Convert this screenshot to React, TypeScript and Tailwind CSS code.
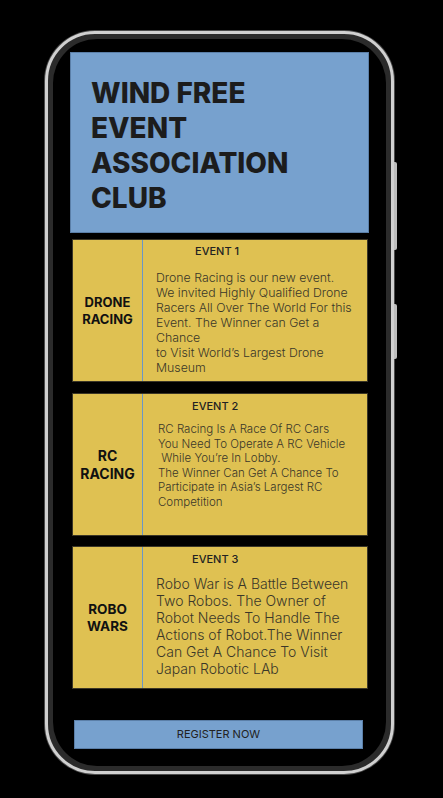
const events = [
  {
    name: ['DRONE', 'RACING'],
    nameSize: 'text-[13px]',
    label: 'EVENT 1',
    labelPad: 'pl-[52px] pt-[4px]',
    textPad: 'pl-[13px] mt-[12px]',
    textSize: 'text-[12.3px] leading-[15px]',
    text: "Drone Racing is our new event.\nWe invited Highly Qualified Drone\nRacers All Over The World For this\nEvent. The Winner can Get a\nChance\nto Visit World’s Largest Drone\nMuseum",
    gap: 'mt-[6px]',
  },
  {
    name: ['RC', 'RACING'],
    nameSize: 'text-[14px]',
    label: 'EVENT 2',
    labelPad: 'pl-[49px] pt-[5px]',
    textPad: 'pl-[15px] mt-[9px]',
    textSize: 'text-[11.5px] leading-[14.5px]',
    text: "RC Racing Is A Race Of RC Cars\nYou Need To Operate A RC Vehicle\n While You’re In Lobby.\nThe Winner Can Get A Chance To\nParticipate in Asia’s Largest RC\nCompetition",
    gap: 'mt-[11px]',
  },
  {
    name: ['ROBO', 'WARS'],
    nameSize: 'text-[13.5px]',
    label: 'EVENT 3',
    labelPad: 'pl-[49px] pt-[5px]',
    textPad: 'pl-[13px] mt-[9px]',
    textSize: 'text-[14px] leading-[17px]',
    text: "Robo War is A Battle Between\nTwo Robos. The Owner of\nRobot Needs To Handle The\nActions of Robot.The Winner\nCan Get A Chance To Visit\nJapan Robotic LAb",
    gap: 'mt-[10px]',
  },
];

const App = () => {
  return (
    <div className="h-[798px] w-[443px] overflow-hidden bg-black pl-[45px] pt-[31px] font-['Inter',sans-serif]">
      {/* Phone frame */}
      <div className="relative h-[743px] w-[349px] rounded-[50px] border-[3px] border-[#d0d0d0] bg-[#2b2b2b] p-[5px] shadow-[0_0_0_1px_#4a4a4a]">
        <div className="absolute right-[-6px] top-[128px] h-[88px] w-[3px] rounded-r-[2px] bg-[#bdbdbd]" />
        <div className="absolute right-[-6px] top-[270px] h-[55px] w-[3px] rounded-r-[2px] bg-[#bdbdbd]" />

        <div className="flex h-full flex-col rounded-[44px] bg-black px-[17px] pt-[13px]">
          {/* Header */}
          <div className="h-[181px] border border-[#5b7fa8] bg-[#77a1ce] pl-[20px] pt-[23px]">
            <h1 className="text-[28px] font-extrabold leading-[35px] text-[#1c1c1c]">
              WIND FREE
              <br />
              EVENT
              <br />
              ASSOCIATION
              <br />
              CLUB
            </h1>
          </div>

          {/* Events */}
          {events.map((ev) => (
            <div key={ev.label} className={`${ev.gap} ml-[2px] mr-[1px] flex h-[143px] border border-[#3b3626] bg-[#dfc152]`}>
              <div className="flex w-[70px] shrink-0 items-center justify-center border-r border-[#6b96c6] text-center">
                <p className={`${ev.nameSize} font-bold leading-[1.25] text-[#111]`}>
                  {ev.name[0]}
                  <br />
                  {ev.name[1]}
                </p>
              </div>
              <div className="flex-1">
                <p className={`${ev.labelPad} text-[11px] leading-[14px] font-medium text-[#222]`}>{ev.label}</p>
                <p className={`${ev.textPad} ${ev.textSize} whitespace-pre font-light text-[#3a3729]`}>{ev.text}</p>
              </div>
            </div>
          ))}

          {/* Register */}
          <button className="ml-[4px] mr-[6px] mt-[31px] h-[29px] border border-[#5b7fa8] bg-[#77a1ce] text-[11px] text-[#222]">
            REGISTER NOW
          </button>
        </div>
      </div>
    </div>
  );
};

export default App;
